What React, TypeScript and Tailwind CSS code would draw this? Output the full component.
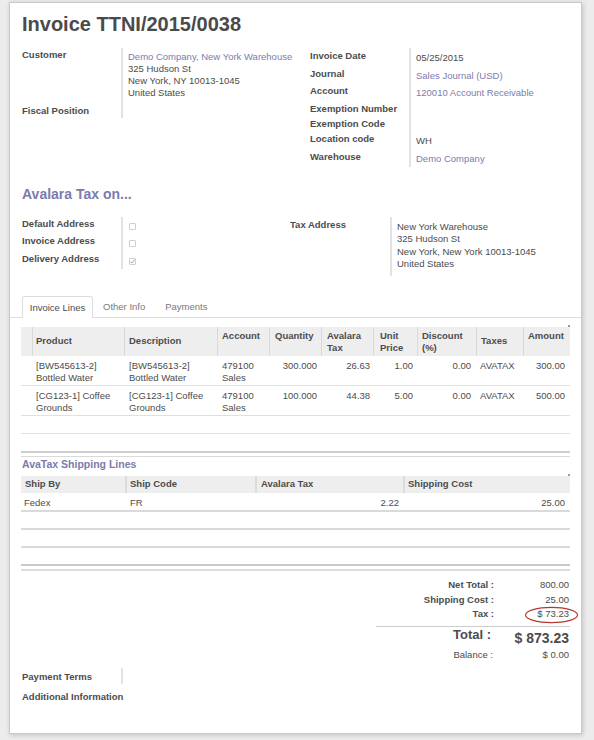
import React from "react";

const LINK = "text-[#7c7bad]";
const DIV = "border-l-2 border-[#e2e2e2]";

function Check({ checked }: { checked?: boolean }) {
  return (
    <div className="mt-[6px] h-[7px] w-[7px] border border-[#cfcfcf] bg-white rounded-[1px] relative">
      {checked && (
        <svg width="7" height="7" viewBox="0 0 7 7" className="absolute left-[-1px] top-[-1px]">
          <path d="M1.5 3.7 L2.9 5.1 L5.6 1.6" stroke="#9a9a9a" strokeWidth="0.9" fill="none" />
        </svg>
      )}
    </div>
  );
}

const headCols = "grid grid-cols-[11px_92px_93px_52px_52px_52px_44px_59px_47px_47px]";
const shipCols = "grid grid-cols-[104px_130px_148px_167px]";

function InvoiceRow({ cells }: { cells: string[][] }) {
  return (
    <div className={`${headCols} h-[30px] border-b border-[#e0e0e0] leading-[12px]`}>
      <div></div>
      <div className="pl-[4px] pt-[4px]">{cells[0].map((l, i) => <div key={i}>{l}</div>)}</div>
      <div className="pl-[5px] pt-[4px]">{cells[1].map((l, i) => <div key={i}>{l}</div>)}</div>
      <div className="pl-[5px] pt-[4px]">{cells[2].map((l, i) => <div key={i}>{l}</div>)}</div>
      <div className="pr-[4px] pt-[4px] text-right">{cells[3][0]}</div>
      <div className="pr-[3px] pt-[4px] text-right">{cells[4][0]}</div>
      <div className="pr-[4px] pt-[4px] text-right">{cells[5][0]}</div>
      <div className="pr-[5px] pt-[4px] text-right">{cells[6][0]}</div>
      <div className="pl-[4px] pt-[4px]">{cells[7][0]}</div>
      <div className="pr-[5px] pt-[4px] text-right">{cells[8][0]}</div>
    </div>
  );
}

export default function App() {
  return (
    <div className="min-h-[740px] bg-[#ececec] pl-[9px] pt-[2px] font-['Liberation_Sans',Arial,sans-serif] text-[9.5px] leading-[12px] text-[#4c4c4c]">
      <div className="w-[573px] border border-[#c9c9c9] bg-white px-[11px] pt-[9px] pb-[30px] shadow-[1px_1px_5px_rgba(0,0,0,0.18)]">
        {/* Title */}
        <div className="pl-[1px] text-[20px] leading-[24px] font-bold text-[#4a4a4a]">Invoice TTNI/2015/0038</div>

        {/* Top group */}
        <div className="mt-[12px] flex">
          <div className="w-[288px]">
            <div className="flex h-[56px]">
              <div className="w-[100px] pl-[1px] pt-[1px] font-bold">Customer</div>
              <div className={`flex-1 ${DIV} pl-[5px] pt-[3px]`}>
                <div className={LINK}>Demo Company, New York Warehouse</div>
                <div>325 Hudson St</div>
                <div>New York, NY 10013-1045</div>
                <div>United States</div>
              </div>
            </div>
            <div className="flex h-[14px]">
              <div className="w-[100px] pl-[1px] pt-[1px] font-bold">Fiscal Position</div>
              <div className={`flex-1 ${DIV}`}></div>
            </div>
          </div>
          <div className="flex-1">
            {[
              { l: "Invoice Date", v: "05/25/2015", h: "h-[18px]" },
              { l: "Journal", v: "Sales Journal (USD)", h: "h-[17px]", link: true },
              { l: "Account", v: "120010 Account Receivable", h: "h-[18px]", link: true },
              { l: "Exemption Number", v: "", h: "h-[15px]" },
              { l: "Exemption Code", v: "", h: "h-[15px]" },
              { l: "Location code", v: "WH", h: "h-[18px]" },
              { l: "Warehouse", v: "Demo Company", h: "h-[18px]", link: true },
            ].map((r) => (
              <div key={r.l} className={`flex ${r.h}`}>
                <div className="w-[100px] pl-[1px] pt-[2px] font-bold">{r.l}</div>
                <div className={`flex-1 ${DIV} pl-[5px] pt-[4px] ${r.link ? LINK : ""}`}>{r.v}</div>
              </div>
            ))}
          </div>
        </div>

        {/* Avalara */}
        <div className="mt-[19px] pl-[1px] text-[14px] leading-[17px] font-bold text-[#7c7bad]">Avalara Tax on...</div>
        <div className="mt-[14px] flex">
          <div className="w-[269px]">
            {[
              { l: "Default Address", h: "h-[17px]" },
              { l: "Invoice Address", h: "h-[18px]" },
              { l: "Delivery Address", h: "h-[17px]", c: true },
            ].map((r) => (
              <div key={r.l} className={`flex ${r.h}`}>
                <div className="w-[100px] pl-[1px] pt-[1px] font-bold">{r.l}</div>
                <div className={`flex-1 ${DIV} pl-[6px]`}>
                  <Check checked={r.c} />
                </div>
              </div>
            ))}
          </div>
          <div className="flex flex-1">
            <div className="w-[100px] pt-[2px] font-bold">Tax Address</div>
            <div className={`flex-1 ${DIV} pl-[5px] pt-[4px] pb-[5px] leading-[12.4px]`}>
              <div>New York Warehouse</div>
              <div>325 Hudson St</div>
              <div>New York, New York 10013-1045</div>
              <div>United States</div>
            </div>
          </div>
        </div>

        {/* Tabs */}
        <div className="-mx-[11px] mt-[20px] flex h-[22px] border-b border-[#dddddd] pl-[12px]">
          <div className="flex h-[22px] w-[71px] items-center justify-center rounded-t-[3px] border border-b-0 border-[#dddddd] bg-white pt-[2px] text-[#4c4c4c]">
            Invoice Lines
          </div>
          <div className="flex items-center px-[10px] pt-[2px] text-[#7a7a7a]">Other Info</div>
          <div className="flex items-center px-[10px] pt-[2px] text-[#7a7a7a]">Payments</div>
        </div>

        {/* Invoice lines table */}
        <div className="relative mt-[9px]">
          <div className="absolute right-[0px] top-[-2px] h-[2px] w-[2px] bg-[#9a9a9a]"></div>
          <div className={`${headCols} h-[29px] bg-[#eeeeee] font-bold leading-[12px]`}>
            <div></div>
            <div className="flex items-center border-l border-[#d9d9d9] pl-[3px]">Product</div>
            <div className="flex items-center border-l border-[#d9d9d9] pl-[4px]">Description</div>
            <div className="border-l border-[#d9d9d9] pl-[4px] pt-[3px]">Account</div>
            <div className="overflow-hidden whitespace-nowrap border-l border-[#d9d9d9] pl-[5px] pt-[3px]">Quantity</div>
            <div className="border-l border-[#d9d9d9] pl-[5px] pt-[3px]">Avalara<br />Tax</div>
            <div className="border-l border-[#d9d9d9] pl-[6px] pt-[3px]">Unit<br />Price</div>
            <div className="border-l border-[#d9d9d9] pl-[4px] pt-[3px]">Discount<br />(%)</div>
            <div className="flex items-center border-l border-[#d9d9d9] pl-[4px]">Taxes</div>
            <div className="border-l border-[#d9d9d9] pl-[4px] pt-[3px]">Amount</div>
          </div>
          <InvoiceRow
            cells={[
              ["[BW545613-2]", "Bottled Water"],
              ["[BW545613-2]", "Bottled Water"],
              ["479100", "Sales"],
              ["300.000"],
              ["26.63"],
              ["1.00"],
              ["0.00"],
              ["AVATAX"],
              ["300.00"],
            ]}
          />
          <InvoiceRow
            cells={[
              ["[CG123-1] Coffee", "Grounds"],
              ["[CG123-1] Coffee", "Grounds"],
              ["479100", "Sales"],
              ["100.000"],
              ["44.38"],
              ["5.00"],
              ["0.00"],
              ["AVATAX"],
              ["500.00"],
            ]}
          />
          <div className="h-[18px] border-b border-[#e0e0e0]"></div>
          <div className="h-[19px] border-b-2 border-[#cfcfcf]"></div>
          <div className="mt-[3px] h-px bg-[#d9d9d9]"></div>
        </div>

        {/* Shipping lines */}
        <div className="mt-[1px] pl-[1px] text-[10.5px] leading-[13px] font-bold text-[#7c7bad]">AvaTax Shipping Lines</div>
        <div className="relative mt-[5px]">
          <div className="absolute right-[0px] top-[-2px] h-[2px] w-[2px] bg-[#9a9a9a]"></div>
          <div className={`${shipCols} h-[17px] bg-[#eeeeee] font-bold`}>
            <div className="flex items-center pl-[4px]">Ship By</div>
            <div className="flex items-center border-l-2 border-[#dcdcdc] pl-[3px]">Ship Code</div>
            <div className="flex items-center border-l-2 border-[#dcdcdc] pl-[4px]">Avalara Tax</div>
            <div className="flex items-center border-l-2 border-[#dcdcdc] pl-[3px]">Shipping Cost</div>
          </div>
          <div className={`${shipCols} h-[19px] border-b-2 border-[#dadada]`}>
            <div className="pl-[3px] pt-[4px]">Fedex</div>
            <div className="pl-[5px] pt-[4px]">FR</div>
            <div className="pr-[4px] pt-[4px] text-right">2.22</div>
            <div className="pr-[5px] pt-[4px] text-right">25.00</div>
          </div>
          <div className="h-[18px] border-b-2 border-[#dadada]"></div>
          <div className="h-[18px] border-b-2 border-[#dadada]"></div>
          <div className="h-[18px] border-b-2 border-[#c9c9c9]"></div>
          <div className="mt-[3px] h-[2px] bg-[#dcdcdc]"></div>
        </div>

        {/* Totals */}
        <div className="ml-auto mt-[8px] w-[194px]">
          <div className="grid h-[15px] grid-cols-[118px_76px]">
            <div className="text-right font-bold">Net Total :</div>
            <div className="pr-[1px] text-right">800.00</div>
          </div>
          <div className="grid h-[14px] grid-cols-[118px_76px]">
            <div className="text-right font-bold">Shipping Cost :</div>
            <div className="pr-[1px] text-right">25.00</div>
          </div>
          <div className="grid h-[12px] grid-cols-[118px_76px]">
            <div className="text-right font-bold">Tax :</div>
            <div className="relative pr-[1px] text-right">
              $ 73.23
              <svg width="56" height="18" viewBox="0 0 56 18" className="absolute left-[30px] top-[-2px] overflow-visible">
                <ellipse cx="27.5" cy="9" rx="26" ry="7.6" fill="none" stroke="#b8362c" strokeWidth="1.1" />
              </svg>
            </div>
          </div>
          <div className="mt-[6px] h-px bg-[#cccccc]"></div>
          <div className="grid h-[22px] grid-cols-[118px_76px] items-start">
            <div className="pr-[3px] text-right text-[13px] leading-[16px] font-bold">Total :</div>
            <div className="pr-[1px] pt-[2px] text-right text-[14px] leading-[18px] font-bold">$ 873.23</div>
          </div>
          <div className="grid h-[12px] grid-cols-[118px_76px]">
            <div className="pr-[1px] text-right">Balance :</div>
            <div className="pr-[1px] text-right">$ 0.00</div>
          </div>
        </div>

        {/* Payment terms */}
        <div className="mt-[7px] flex h-[16px]">
          <div className="w-[100px] pl-[1px] pt-[3px] font-bold">Payment Terms</div>
          <div className={`flex-1 ${DIV}`}></div>
        </div>
        <div className="mt-[7px] pl-[1px] font-bold">Additional Information</div>
      </div>
    </div>
  );
}
